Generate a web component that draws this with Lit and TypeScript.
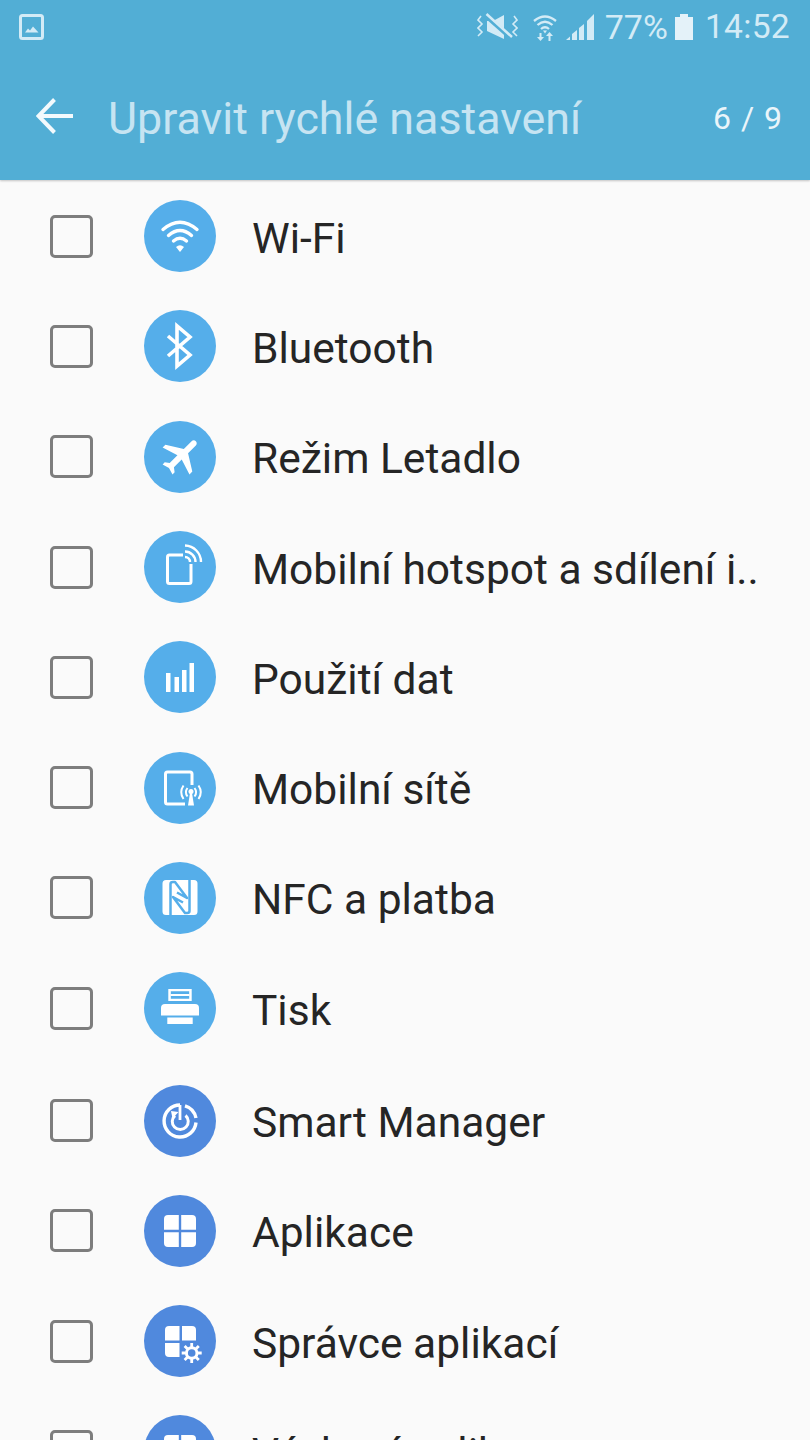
import { LitElement, html, css, svg } from "lit";
import { customElement } from "lit/decorators.js";

const ICONS: Record<string, unknown> = {
  wifi: svg`<g fill="none" stroke="#fff" stroke-width="3.400" stroke-linecap="round"><path d="M19 29.500 Q36 15 53 29.500"/><path d="M24.500 35.500 Q36 25.500 47.500 35.500"/><path d="M29.500 41 Q36 35.500 42.500 41"/></g><path d="M32 47 Q36 43.500 40 47 L36 52Z" fill="#fff"/>`,
  bt: svg`<path d="M24 26 L46 45 L33 56 V16 L46 27 L24 46" fill="none" stroke="#fff" stroke-width="3.600"/>`,
  plane: svg`<path transform="translate(37.700 34.300) rotate(45) scale(2) translate(-11.500 -12)" fill="#fff" d="M21 16v-2l-8-5V3.500c0-.83-.67-1.500-1.500-1.500S10 2.670 10 3.500V9l-8 5v2l8-2.500V19l-2 1.500V22l3.500-1 3.500 1v-1.500L13 19v-5.500l8 2.500z"/>`,
  hotspot: svg`<g fill="none" stroke="#fff"><path d="M47 33 V50.500 a2 2 0 0 1 -2 2 H25.500 a2 2 0 0 1 -2 -2 V26 a2 2 0 0 1 2 -2 H39" stroke-width="3"/><path d="M41 26 a5 5 0 0 1 5 5" stroke-width="2.400"/><path d="M41 20.500 a10.500 10.500 0 0 1 10.500 10.500" stroke-width="2.400"/><path d="M41 14.500 a16.500 16.500 0 0 1 16 16.500" stroke-width="2.400"/></g>`,
  data: svg`<g fill="#fff"><rect x="22" y="32" width="4.500" height="19"/><rect x="30.500" y="36" width="4.500" height="15"/><rect x="38" y="29" width="4.500" height="22"/><rect x="45.500" y="22" width="4.500" height="29"/></g>`,
  mobile: svg`<g fill="none" stroke="#fff"><path d="M41 52 H23.500 a2 2 0 0 1 -2 -2 V22 a2 2 0 0 1 2 -2 H46 a2 2 0 0 1 2 2 V33" stroke-width="3"/><path d="M43.500 36 a7 7 0 0 0 0 8.500 M50.500 36 a7 7 0 0 1 0 8.500" stroke-width="2"/><path d="M39.500 33.500 a12 12 0 0 0 0 13.500 M54.500 33.500 a12 12 0 0 1 0 13.500" stroke-width="2"/></g><circle cx="47" cy="39.500" r="2.500" fill="#fff"/><path d="M46 41 h2 l2 12.500 h-6z" fill="#fff"/>`,
  nfc: svg`<path fill="#fff" d="M22 18 H50 a3.500 3.500 0 0 1 3.500 3.500 V49.500 a3.500 3.500 0 0 1 -3.500 3.500 H22 a3.500 3.500 0 0 1 -3.500 -3.500 V21.500 a3.500 3.500 0 0 1 3.500 -3.500z"/><g fill="none" stroke="#55aeea" stroke-width="2.500" stroke-linejoin="round"><path d="M26.500 53 V22 Q26.500 20 29 20 H31 L43 36 L33 30.500"/><path d="M45.500 18 V49 Q45.500 51 43 51 H41 L29 35 L39 40.500"/></g>`,
  print: svg`<g fill="#fff"><path fill-rule="evenodd" d="M24.300 17 H47.700 V29 H24.300z M26.800 19.300 V26.700 H45.200 V19.300z"/><rect x="26.500" y="22" width="19" height="2"/><path d="M17 36 a4 4 0 0 1 4 -4 H51 a4 4 0 0 1 4 4 V43.500 H17z"/><rect x="23.300" y="45.500" width="25.400" height="6.500"/></g>`,
  smart: svg`<g fill="none" stroke="#fff"><path d="M36 20 A16 16 0 1 0 52 37.500" stroke-width="3.400"/><path d="M41 20.800 A16 16 0 0 1 52 33" stroke-width="3.400"/><path d="M31 30.500 A8 8 0 1 0 41.500 30.500" stroke-width="3"/><path d="M36 20 V35" stroke-width="2.800"/></g><path d="M27 26 L34.500 27 L28.500 33.500z" fill="#fff"/>`,
  apps: svg`<g fill="#fff"><path d="M34.800 20 V34.800 H20 V24 a4 4 0 0 1 4 -4z"/><path d="M37.200 20 H48 a4 4 0 0 1 4 4 V34.800 H37.200z"/><path d="M34.800 37.200 V52 H24 a4 4 0 0 1 -4 -4 V37.200z"/><path d="M37.200 37.200 H52 V48 a4 4 0 0 1 -4 4 H37.200z"/></g>`,
  mgr: svg`<g fill="#fff"><path d="M35.500 21 V35.500 H21 V25 a4 4 0 0 1 4 -4z"/><path d="M38 21 H48 a4 4 0 0 1 4 4 V35.500 H38z"/><path d="M35.500 38 V52 H25 a4 4 0 0 1 -4 -4 V38z"/></g><circle cx="47.700" cy="48" r="11" fill="#5089dd"/><circle cx="47.700" cy="48" r="5.300" fill="none" stroke="#fff" stroke-width="3"/><g stroke="#fff" stroke-width="2.800"><path d="M47.700 38 V42 M47.700 54 V58 M37.700 48 H41.700 M53.700 48 H57.700 M40.600 40.900 L43.400 43.700 M52 52.300 L54.800 55.100 M40.600 55.100 L43.400 52.300 M52 43.700 L54.800 40.900"/></g>`,
};

const ROWS = [
  ["wifi", "Wi-Fi", 0],
  ["bt", "Bluetooth", 0],
  ["plane", "Režim Letadlo", 0],
  ["hotspot", "Mobilní hotspot a sdílení i..", 0],
  ["data", "Použití dat", 0],
  ["mobile", "Mobilní sítě", 0],
  ["nfc", "NFC a platba", 0],
  ["print", "Tisk", 0],
  ["smart", "Smart Manager", 1],
  ["apps", "Aplikace", 1],
  ["mgr", "Správce aplikací", 1],
  ["apps", "Výchozí aplikace", 1],
] as const;

@customElement("app-root")
export class AppRoot extends LitElement {
  static styles = css`
    :host { display: block; width: 810px; height: 1440px; overflow: hidden; background: #fafafa; font-family: Roboto, sans-serif; }
    .head { height: 180px; background: #52aed5; box-shadow: 0 1px 2px rgba(0,0,0,.22); display: flex; flex-direction: column; }
    .status { height: 54px; display: flex; align-items: center; padding: 0 20px 0 19px; color: #d3ebf6; flex: none; }
    .status .pic { margin-right: auto; }
    .status svg { display: block; flex: none; }
    .wifi { margin-left: 15px; }
    .signal { margin-left: 9px; }
    .batt { margin-left: 7px; }
    .pct { font-size: 34px; line-height: 54px; margin-left: 10px; }
    .time { font-size: 33.600px; letter-spacing: .3px; line-height: 54px; margin-left: 12px; }
    .bar { height: 126px; display: flex; align-items: center; padding: 0 27px 0 36px; box-sizing: border-box; }
    .title { font-size: 44.800px; color: #c6e4f2; margin-left: 34px; flex: 1; white-space: nowrap; margin-top: 2px; }
    .count { font-size: 32px; color: #eaf5fa; letter-spacing: 1px; margin-top: 1px; }
    .back { margin-top: -2px; }
    .row { height: 110.300px; display: flex; align-items: center; padding-left: 50px; box-sizing: border-box; position: relative; top: 1px; }
    .row.group { margin-top: 2px; }
    .box { width: 43px; height: 43px; box-sizing: border-box; border: 3px solid #7d7d7d; border-radius: 5px; flex: none; }
    .circle { width: 72px; height: 72px; border-radius: 50%; margin-left: 51px; flex: none; }
    .circle svg { display: block; }
    .light { background: #55aeea; }
    .dark { background: #5089dd; }
    .label { font-size: 42.500px; color: #252525; margin-left: 36px; margin-top: 4px; white-space: nowrap; }
  `;

  render() {
    return html`
      <div class="head">
        <div class="status">
          <svg class="pic" width="26" height="28" viewBox="0 0 26 28"><rect x="1.500" y="2.500" width="22" height="23" rx="2" fill="none" stroke="#d3ebf6" stroke-width="3"/><path d="M6 19.500 L9 15.500 L11 17.500 L14 13.500 L19.500 19.500z" fill="#d3ebf6"/></svg>
          <svg width="41" height="28" viewBox="0 0 41 28"><g fill="none" stroke="#d3ebf6" stroke-width="1.600"><path d="M4 3 L1 7 L5 11 L1 15 L5 19 L1 23"/><path d="M37 3 L40 7 L36 11 L40 15 L36 19 L40 23"/></g><path d="M10 8 H16 L27 2 V26 L10 18z" fill="#d3ebf6"/><path d="M8 2 L34 25" stroke="#52aed5" stroke-width="4.500"/><path d="M9.500 1 L35 24" stroke="#d3ebf6" stroke-width="2.500"/></svg>
          <svg class="wifi" width="24" height="28" viewBox="0 0 24 28"><g fill="none" stroke="#d3ebf6" stroke-width="2.300"><path d="M1 8 Q12 -1 23 8"/><path d="M4.500 12 Q12 5.500 19.500 12"/><path d="M8 16 Q12 12.500 16 16"/></g><path d="M10 17.500 h4 l-2 3z" fill="#d3ebf6"/><path d="M6.500 20 V24 H4 L7.500 28 L11 24 H8.500 V20z M15.500 28 V23 H13 L16.500 19 L20 23 H17.500 V28z" fill="#d3ebf6"/></svg>
          <svg class="signal" width="29" height="28" viewBox="0 0 29 28"><g fill="#d3ebf6"><path d="M0 27 L4 23.500 V27z"/><path d="M6 21 L11 17 V27 H6z"/><path d="M13 15 L18 11 V27 H13z"/><path d="M21 8 L28 1 V27 H21z"/></g></svg>
          <span class="pct">77%</span>
          <svg class="batt" width="18" height="28" viewBox="0 0 18 28"><path d="M5 1 H13 V4 H18 V27 H0 V4 H5z" fill="#e4f2f9"/></svg>
          <span class="time">14:52</span>
        </div>
        <div class="bar">
          <svg class="back" width="38" height="38" viewBox="0 0 38 38"><path d="M37 19 H4 M18.500 2.500 L2.500 19 L18.500 35.500" fill="none" stroke="#f3fafd" stroke-width="4"/></svg>
          <span class="title">Upravit rychlé nastavení</span>
          <span class="count">6 / 9</span>
        </div>
      </div>
      ${ROWS.map(
        ([icon, label, dark], i) => html`
          <div class="row ${i === 8 ? "group" : ""}">
            <div class="box"></div>
            <div class="circle ${dark ? "dark" : "light"}"><svg width="72" height="72" viewBox="0 0 72 72">${ICONS[icon]}</svg></div>
            <span class="label">${label}</span>
          </div>
        `
      )}
    `;
  }
}
